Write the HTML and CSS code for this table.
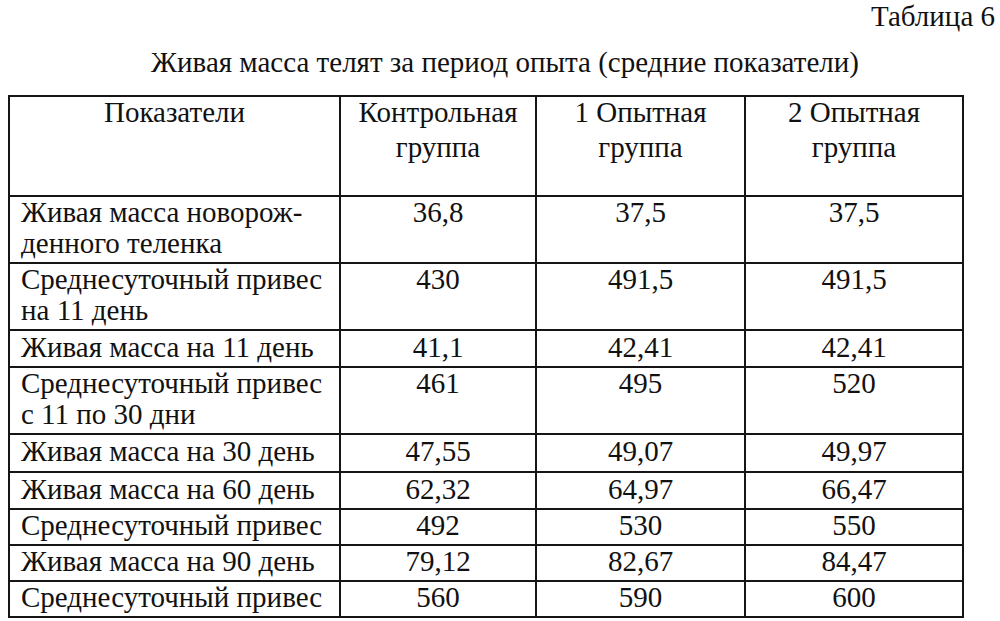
FILE: index.html
```html
<!DOCTYPE html>
<html>
<head>
<meta charset="utf-8">
<link rel="stylesheet" href="styles.css">
</head>
<body>
<div class="page">
  <div class="caption">Таблица 6</div>
  <div class="title">Живая масса телят за период опыта (средние показатели)</div>
  <table class="data">
    <colgroup>
      <col class="c1"><col class="c2"><col class="c3"><col class="c4">
    </colgroup>
    <tr class="head">
      <th class="name"><div class="hd">Показатели</div></th>
      <th><div class="hd">Контрольная<br>группа</div></th>
      <th><div class="hd">1 Опытная<br>группа</div></th>
      <th><div class="hd">2 Опытная<br>группа</div></th>
    </tr>
    <tr class="r2">
      <td class="name">Живая масса новорож-<br>денного теленка</td>
      <td>36,8</td><td>37,5</td><td>37,5</td>
    </tr>
    <tr class="r2">
      <td class="name">Среднесуточный привес<br>на 11 день</td>
      <td>430</td><td>491,5</td><td>491,5</td>
    </tr>
    <tr class="r1 h37">
      <td class="name">Живая масса на 11 день</td>
      <td>41,1</td><td>42,41</td><td>42,41</td>
    </tr>
    <tr class="r2">
      <td class="name">Среднесуточный привес<br>с 11 по 30 дни</td>
      <td>461</td><td>495</td><td>520</td>
    </tr>
    <tr class="r1 h38">
      <td class="name">Живая масса на 30 день</td>
      <td>47,55</td><td>49,07</td><td>49,97</td>
    </tr>
    <tr class="r1 h37">
      <td class="name">Живая масса на 60 день</td>
      <td>62,32</td><td>64,97</td><td>66,47</td>
    </tr>
    <tr class="r1 h34">
      <td class="name">Среднесуточный привес</td>
      <td>492</td><td>530</td><td>550</td>
    </tr>
    <tr class="r1 h35">
      <td class="name">Живая масса на 90 день</td>
      <td>79,12</td><td>82,67</td><td>84,47</td>
    </tr>
    <tr class="r1 h33">
      <td class="name">Среднесуточный привес</td>
      <td>560</td><td>590</td><td>600</td>
    </tr>
  </table>
</div>
</body>
</html>
```

FILE: styles.css
```css
html, body {
  margin: 0;
  padding: 0;
  background: #fff;
}
.page, .caption, .title, .data, .data th, .data td {
  font-family: "Liberation Serif", serif;
  color: #111;
}
.page {
  width: 1000px;
  height: 621px;
  overflow: hidden;
}
.caption {
  text-align: right;
  font-size: 29px;
  line-height: 33px;
  padding: 0 5px 0 0;
}
.title {
  text-align: center;
  font-size: 29px;
  line-height: 32px;
  padding: 13px 0 0 10px;
}
.data {
  border-collapse: collapse;
  margin: 17px 0 0 8px;
  table-layout: fixed;
  width: 954px;
  font-size: 29px;
}
.c1 { width: 331px; }
.c2 { width: 196px; }
.c3 { width: 209px; }
.c4 { width: 218px; }
.data th, .data td {
  border: 2px solid #151515;
  padding: 0;
  text-align: center;
  font-weight: normal;
  line-height: 31px;
}
.data .name {
  text-align: left;
  padding-left: 11px;
}
.head { height: 100px; }
.head th {
  vertical-align: top;
  padding-top: 0;
  line-height: 35px;
}
.hd { margin-top: -2px; }
.head th.name { text-align: center; padding-left: 0; }
.r2 { height: 67px; }
.r2 td { vertical-align: top; padding-top: 0; }
.r1 td { vertical-align: middle; padding-top: 0; padding-bottom: 3px; }
.h38 { height: 38px; }
.h37 { height: 37px; }
.h35 { height: 35px; }
.h34 { height: 34px; }
.h33 { height: 33px; }
```
